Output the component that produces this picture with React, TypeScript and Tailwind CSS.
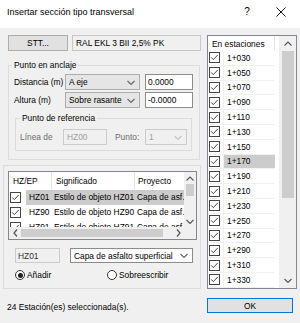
import React from "react"

const stations = [
  "1+030", "1+050", "1+070", "1+090", "1+110", "1+130", "1+150", "1+170",
  "1+190", "1+210", "1+230", "1+250", "1+270", "1+290", "1+310", "1+330",
]

const rows = [
  { hz: "HZ01", sig: "Estilo de objeto HZ01", proy: "Capa de asfalto superficial", sel: true },
  { hz: "HZ90", sig: "Estilo de objeto HZ90", proy: "Capa de asfalto superficial", sel: false },
  { hz: "HZ91", sig: "Estilo de objeto HZ91", proy: "Capa de asfalto superficial", sel: false },
]

function Chevron({ dir = "down", color = "#555" }: { dir?: "down" | "up" | "left" | "right"; color?: string }) {
  if (dir === "left" || dir === "right") {
    const d = dir === "left" ? "M4 0.5 L1 4 L4 7.5" : "M1 0.5 L4 4 L1 7.5"
    return (
      <svg width="5" height="8" viewBox="0 0 5 8" className="shrink-0">
        <path d={d} fill="none" stroke={color} strokeWidth="1.2" />
      </svg>
    )
  }
  const d = dir === "down" ? "M0.5 1 L4 4.5 L7.5 1" : "M0.5 4.5 L4 1 L7.5 4.5"
  return (
    <svg width="8" height="5" viewBox="0 0 8 5" className="shrink-0">
      <path d={d} fill="none" stroke={color} strokeWidth="1.1" />
    </svg>
  )
}

function Checkbox() {
  return (
    <svg width="11" height="11" viewBox="0 0 11 11" className="shrink-0">
      <rect x="0.5" y="0.5" width="10" height="10" fill="white" stroke="#444" />
      <path d="M2.2 5.4 L4.3 7.6 L8.8 2.9" fill="none" stroke="#444" strokeWidth="1" />
    </svg>
  )
}

function Radio({ on }: { on?: boolean }) {
  return (
    <span className="w-[10px] h-[10px] rounded-full border border-[#333] bg-white flex items-center justify-center shrink-0">
      {on && <span className="w-[5px] h-[5px] rounded-full bg-[#222]" />}
    </span>
  )
}

function Combo({ value, w, grey = true, disabled = false }: { value: string; w: string; grey?: boolean; disabled?: boolean }) {
  const look = disabled
    ? "border-[#cccccc] bg-[#f0f0f0] text-[#a0a0a0]"
    : grey
    ? "border-[#adadad] bg-[#e5e5e5]"
    : "border-[#8c8c8c] bg-white"
  return (
    <div className={`${w} h-full flex items-center justify-between border pl-[3px] pr-[4px] ${look}`}>
      <span className="truncate">{value}</span>
      <Chevron color={disabled ? "#c4c4c4" : "#666"} />
    </div>
  )
}

export default function App() {
  return (
    <div className="w-[300px] h-[323px] bg-[#f0f0f0] flex flex-col overflow-hidden text-black font-['Liberation_Sans',Arial,sans-serif] text-[8.4px] leading-[10px]">
      {/* title bar */}
      <div className="h-[28px] shrink-0 bg-white flex items-start pt-[6px] pl-[7px] pr-[9px]">
        <span className="flex-1 text-[9px] leading-[12px]">Insertar sección tipo transversal</span>
        <span className="w-[20px] text-center text-[10px] leading-[12px]">?</span>
        <span className="w-[20px] ml-[14px] h-[12px] flex items-center justify-center">
          <svg width="10" height="10" viewBox="0 0 10 10">
            <path d="M0.5 0.5 L9.5 9.5 M9.5 0.5 L0.5 9.5" stroke="#111" strokeWidth="1" />
          </svg>
        </span>
      </div>

      <div className="flex pl-[3px] gap-[6px]">
        {/* left column */}
        <div className="w-[198px] flex flex-col">
          <div className="mt-[7px] h-[16px] flex gap-[4px] pl-[5px]">
            <div className="w-[60px] h-full border border-[#adadad] bg-[#e1e1e1] flex items-center justify-center">STT...</div>
            <div className="flex-1 h-full border border-[#c8c8c8] bg-[#f0f0f0] flex items-center pl-[3px]">RAL EKL 3 BII 2,5% PK</div>
          </div>

          <fieldset className="mt-[9px] ml-[5px] mr-[1px] border border-[#dcdcdc] pb-[8px]">
            <legend className="ml-[3px] px-[2px] leading-[10px]">Punto en anclaje</legend>
            <div className="mt-[4px] h-[16px] flex pl-[5px]">
              <span className="w-[51px] self-center">Distancia (m)</span>
              <Combo value="A eje" w="w-[75px]" />
              <div className="ml-[5px] w-[48px] h-full border border-[#8c8c8c] bg-white flex items-center pl-[2px]">0.0000</div>
            </div>
            <div className="mt-[2px] h-[16px] flex pl-[5px]">
              <span className="w-[51px] self-center">Altura (m)</span>
              <Combo value="Sobre rasante" w="w-[75px]" />
              <div className="ml-[5px] w-[48px] h-full border border-[#8c8c8c] bg-white flex items-center pl-[2px]">-0.0000</div>
            </div>
            <fieldset className="mt-[5px] ml-[6px] mr-[7px] border border-[#dcdcdc] pb-[5px]">
              <legend className="ml-[4px] px-[2px] leading-[10px]">Punto de referencia</legend>
              <div className="mt-[6px] h-[16px] flex pl-[4px] text-[#6d6d6d]">
                <span className="w-[43px] self-center">Línea de</span>
                <div className="w-[44px] h-full border border-[#cccccc] bg-[#f0f0f0] text-[#a0a0a0] flex items-center pl-[3px]">HZ00</div>
                <span className="ml-[8px] w-[30px] self-center">Punto:</span>
                <Combo value="1" w="w-[42px]" disabled />
              </div>
            </fieldset>
          </fieldset>

          <div className="mt-[5px] border border-[#dcdcdc] pl-[4px] pt-[5px] pb-[7px] flex flex-col">
            {/* grid */}
            <div className="w-[189px] h-[69px] border border-[#828790] bg-white flex flex-col">
              <div className="flex flex-1 min-h-0">
                <div className="flex-1 min-w-0 flex flex-col overflow-hidden">
                  <div className="h-[18px] shrink-0 flex items-center">
                    <span className="w-[43px] shrink-0 pl-[4px] h-full flex items-center border-r border-[#e5e5e5]">HZ/EP</span>
                    <span className="w-[83px] shrink-0 pl-[4px] h-full flex items-center border-r border-[#e5e5e5]">Significado</span>
                    <span className="w-[58px] shrink-0 pl-[3px]">Proyecto</span>
                  </div>
                  {rows.map((r) => (
                    <div key={r.hz} className="h-[15px] shrink-0 grid grid-cols-[17px_26px_83px_58px] leading-[15px]">
                      <span className="pl-[1px] flex items-center"><Checkbox /></span>
                      <span className={`pl-[3px] overflow-hidden whitespace-nowrap ${r.sel ? "bg-[#cccccc]" : ""}`}>{r.hz}</span>
                      <span className={`pl-[2px] overflow-hidden whitespace-nowrap ${r.sel ? "bg-[#cccccc]" : ""}`}>{r.sig}</span>
                      <span className={`pl-[2px] truncate ${r.sel ? "bg-[#cccccc]" : ""}`}>{r.proy}</span>
                    </div>
                  ))}
                </div>
                <div className="w-[12px] shrink-0 bg-[#f0f0f0] flex flex-col items-center">
                  <div className="h-[12px] flex items-center"><Chevron dir="up" /></div>
                  <div className="w-[8px] h-[12px] bg-[#cdcdcd]" />
                  <div className="flex-1" />
                  <div className="h-[12px] flex items-center"><Chevron dir="down" /></div>
                </div>
              </div>
              <div className="h-[12px] shrink-0 flex">
                <div className="flex-1 bg-[#f0f0f0] flex items-center">
                  <span className="w-[12px] flex justify-center"><Chevron dir="left" /></span>
                  <div className="w-[142px] h-[8px] bg-[#cdcdcd]" />
                  <div className="flex-1" />
                  <span className="w-[12px] flex justify-center"><Chevron dir="right" /></span>
                </div>
                <div className="w-[12px] bg-[#f0f0f0]" />
              </div>
            </div>

            <div className="mt-[8px] h-[15px] flex pl-[7px]">
              <div className="w-[45px] h-full border border-[#cccccc] bg-[#f0f0f0] text-[#333] flex items-center pl-[2px]">HZ01</div>
              <div className="ml-[10px] h-full flex">
                <Combo value="Capa de asfalto superficial" w="w-[123px]" grey={false} />
              </div>
            </div>

            <div className="mt-[6px] h-[12px] flex items-center pl-[7px]">
              <Radio on />
              <span className="ml-[2px] w-[80px]">Añadir</span>
              <Radio />
              <span className="ml-[2px]">Sobreescribir</span>
            </div>
          </div>

          <div className="mt-[13px] pl-[4px]">24 Estación(es) seleccionada(s).</div>
        </div>

        {/* right column */}
        <div className="w-[90px] flex flex-col">
          <div className="mt-[7px] h-[254px] border border-[#828790] bg-white flex">
            <div className="flex-1 flex flex-col">
              <div className="h-[15px] shrink-0 flex">
                <span className="w-[67px] pl-[4px] flex items-center border-r border-[#e5e5e5]">En estaciones</span>
              </div>
              {stations.map((s, i) => (
                <div key={s} className="h-[14.8px] shrink-0 flex">
                  <span className="w-[16px] flex items-center pl-[1px] border-b border-r border-[#f0f0f0]"><Checkbox /></span>
                  <span className={`w-[51px] flex items-center pl-[3px] border-b border-[#f0f0f0] ${i === 7 ? "bg-[#cccccc]" : ""}`}>{s}</span>
                </div>
              ))}
            </div>
            <div className="w-[17px] bg-[#f0f0f0] flex flex-col items-center">
              <div className="h-[15px] flex items-center"><Chevron dir="up" /></div>
              <div className="w-[12px] h-[147px] bg-[#cdcdcd]" />
              <div className="flex-1" />
              <div className="h-[15px] flex items-center"><Chevron dir="down" /></div>
            </div>
          </div>
          <div className="mt-[9px] w-[86px] h-[15px] border border-[#0078d7] bg-[#e1e1e1] flex items-center justify-center">OK</div>
        </div>
      </div>
    </div>
  )
}
